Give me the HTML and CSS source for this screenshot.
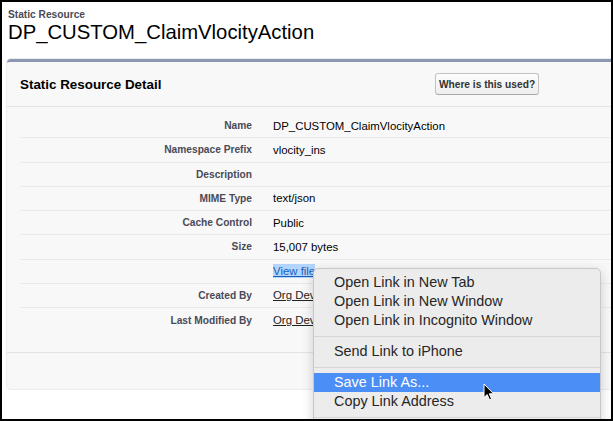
FILE: index.html
```html
<!DOCTYPE html>
<html lang="en">
<head>
  <meta charset="UTF-8">
  <title>Static Resource: DP_CUSTOM_ClaimVlocityAction</title>
  <link rel="stylesheet" href="styles.css">
</head>
<body>
  <div class="frame">
    <div class="page-head">
      <div class="kicker">Static Resource</div>
      <h1 class="page-title">DP_CUSTOM_ClaimVlocityAction</h1>
    </div>

    <div class="panel">
      <div class="panel-head">
        <h2 class="panel-title">Static Resource Detail</h2>
        <button class="btn">Where is this used?</button>
      </div>

      <div class="detail">
        <div class="row"><span class="label">Name</span><span class="value">DP_CUSTOM_ClaimVlocityAction</span></div>
        <div class="row"><span class="label">Namespace Prefix</span><span class="value">vlocity_ins</span></div>
        <div class="row"><span class="label">Description</span><span class="value"></span></div>
        <div class="row"><span class="label">MIME Type</span><span class="value">text/json</span></div>
        <div class="row"><span class="label">Cache Control</span><span class="value">Public</span></div>
        <div class="row"><span class="label">Size</span><span class="value">15,007 bytes</span></div>
        <div class="row"><span class="label"></span><span class="value"><a class="file-link" href="#">View file</a></span></div>
        <div class="row"><span class="label">Created By</span><span class="value"><a class="user-link" href="#">Org Dev</a></span></div>
        <div class="row last"><span class="label">Last Modified By</span><span class="value"><a class="user-link" href="#">Org Dev</a></span></div>
      </div>

      <div class="panel-foot"></div>
    </div>

    <ul class="context-menu">
      <li class="item">Open Link in New Tab</li>
      <li class="item">Open Link in New Window</li>
      <li class="item">Open Link in Incognito Window</li>
      <li class="sep"></li>
      <li class="item">Send Link to iPhone</li>
      <li class="sep"></li>
      <li class="item active">Save Link As...</li>
      <li class="item">Copy Link Address</li>
      <li class="sep"></li>
    </ul>

    <svg class="cursor" width="13" height="18" viewBox="0 0 13 18">
      <path d="M1 1 L1 14.5 L4.2 11.6 L6.6 17 L8.6 16.1 L6.3 10.8 L10.6 10.8 Z" fill="#000" stroke="#fff" stroke-width="1" stroke-linejoin="round"/>
    </svg>
  </div>
</body>
</html>
```

FILE: styles.css
```css
* {
  margin: 0;
  padding: 0;
  box-sizing: border-box;
}

body {
  font-family: "Liberation Sans", Arial, sans-serif;
  background: #fff;
}

.frame {
  position: relative;
  width: 613px;
  height: 421px;
  border: 2px solid #000;
  background: #fff;
  overflow: hidden;
}

/* page header */
.page-head {
  padding: 7px 0 0 6px;
}

.kicker {
  font-size: 10.2px;
  line-height: 12px;
  font-weight: bold;
  color: #4a4a56;
}

.page-title {
  font-size: 20.3px;
  line-height: 22px;
  font-weight: normal;
  color: #000;
}

/* detail panel - runs off the right edge of the shot */
.panel {
  margin: 16px -8px 0 5px;
  height: 330px;
  background: #f8f8f8;
  border-top: 3px solid #8c98b3;
  border-radius: 4px;
  box-shadow: 0 0 0 1px #ececec;
}

.panel-head {
  display: flex;
  align-items: center;
  height: 45px;
  border-bottom: 1px solid #e3e3e3;
}

.panel-title {
  width: 428px;
  padding-left: 13px;
  font-size: 13.4px;
  font-weight: bold;
  color: #000;
}

.btn {
  width: 104px;
  height: 22px;
  font-family: inherit;
  font-size: 10.2px;
  font-weight: bold;
  color: #333;
  background: linear-gradient(#fdfdfd, #eeeeee);
  border: 1px solid #c3c3c3;
  border-bottom-color: #a9a9a9;
  border-radius: 3px;
}

.detail {
  padding: 7px 0 20px 13px;
  border-bottom: 1px solid #e3e3e3;
}

.row {
  display: grid;
  grid-template-columns: 232px 1fr;
  column-gap: 21px;
  align-items: center;
  height: 24.25px;
  border-bottom: 1px solid #eaeaea;
}

.row.last {
  border-bottom: none;
}

.label {
  text-align: right;
  font-size: 10.2px;
  font-weight: bold;
  color: #4a4a56;
}

.value {
  font-size: 11.4px;
  color: #000;
  white-space: nowrap;
}

.file-link {
  color: #1a5fb4;
  background: #b3d5fd;
  padding: 1px 0;
}

.user-link {
  color: #222;
}

/* right-click menu, cut by the bottom of the shot */
.context-menu {
  position: absolute;
  left: 311px;
  top: 266px;
  width: 288px;
  padding: 4px 0 20px;
  list-style: none;
  background: #ececec;
  border: 1px solid #c8c8c8;
  border-radius: 5px;
  box-shadow: 0 3px 12px rgba(0, 0, 0, 0.18);
}

.context-menu .item {
  height: 19px;
  line-height: 19px;
  padding-left: 20px;
  font-size: 14.4px;
  color: #262626;
}

.context-menu .item.active {
  background: #4b8ef5;
  color: #fff;
}

.context-menu .sep {
  height: 1px;
  margin: 5.5px 0;
  background: #d6d6d6;
}

.cursor {
  position: absolute;
  left: 481px;
  top: 381px;
}
```
